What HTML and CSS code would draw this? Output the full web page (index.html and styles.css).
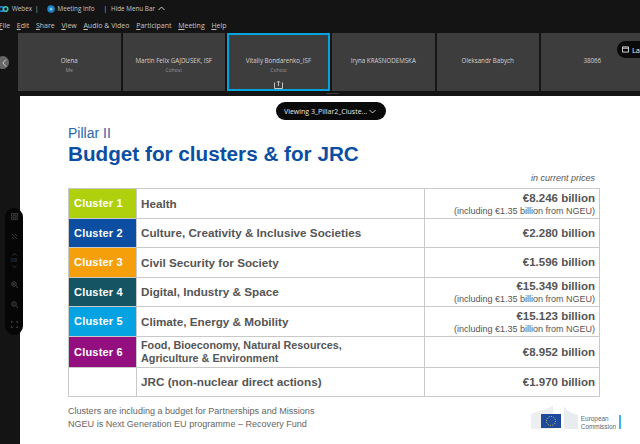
FILE: index.html
```html
<!DOCTYPE html>
<html lang="en">
<head>
<meta charset="utf-8">
<title>Webex</title>
<link rel="stylesheet" href="styles.css">
</head>
<body>
<div class="app">
  <div class="titlebar">
    <svg class="logo" width="10" height="8" viewBox="0 0 10 8"><circle cx="2.500" cy="4" r="2.300" fill="none" stroke="#2f7fe0" stroke-width="1.600"/><circle cx="6.500" cy="4" r="2.300" fill="none" stroke="#35c6a8" stroke-width="1.600"/></svg>
    <span class="t-webex">Webex</span><span class="sep">|</span>
    <svg class="info" width="8" height="8" viewBox="0 0 8 8"><circle cx="4" cy="4" r="3.800" fill="#1f7fc4"/><circle cx="4" cy="4" r="1.600" fill="#7cc6ee"/></svg>
    <span class="t-info">Meeting Info</span><span class="sep sep2">|</span>
    <span>Hide Menu Bar</span>
    <svg class="caret" width="7" height="5" viewBox="0 0 7 5"><path d="M.5 4 3.500 1l3 3" fill="none" stroke="#c8c8c8"/></svg>
  </div>
  <nav class="menubar">
    <span><u>F</u>ile</span><span><u>E</u>dit</span><span><u>S</u>hare</span><span><u>V</u>iew</span><span><u>A</u>udio &amp; Video</span><span><u>P</u>articipant</span><span><u>M</u>eeting</span><span><u>H</u>elp</span>
  </nav>
  <div class="tiles">
    <div class="tile"><b>Olena</b><i>Me</i></div>
    <div class="tile"><b>Martin Felix GAJDUSEK, ISF</b><i>Cohost</i></div>
    <div class="tile active"><b>Vitaliy Bondarenko_ISF</b><i>Cohost</i>
      <svg class="share" width="9" height="9" viewBox="0 0 9 9"><path d="M.5 2.500v6h8v-6M4.500 6V1M3 2.500 4.500 1 6 2.500" fill="none" stroke="#c4c4c4"/></svg>
    </div>
    <div class="tile"><b>Iryna KRASNODEMSKA</b></div>
    <div class="tile"><b>Oleksandr Babych</b></div>
    <div class="tile"><b>38066</b></div>
  </div>
  <main class="slide">
    <p class="pillar">Pillar II</p>
    <h1>Budget for clusters &amp; for JRC</h1>
    <p class="prices">in current prices</p>
    <div class="budget">
      <div class="row r1"><div class="tag c1">Cluster 1</div><div class="name">Health</div><div class="amt"><strong>€8.246 billion</strong><small>(including €1.35 billion from NGEU)</small></div></div>
      <div class="row r2"><div class="tag c2">Cluster 2</div><div class="name">Culture, Creativity &amp; Inclusive Societies</div><div class="amt"><strong>€2.280 billion</strong></div></div>
      <div class="row r3"><div class="tag c3">Cluster 3</div><div class="name">Civil Security for Society</div><div class="amt"><strong>€1.596 billion</strong></div></div>
      <div class="row r4"><div class="tag c4">Cluster 4</div><div class="name">Digital, Industry &amp; Space</div><div class="amt"><strong>€15.349 billion</strong><small>(including €1.35 billion from NGEU)</small></div></div>
      <div class="row r5"><div class="tag c5">Cluster 5</div><div class="name">Climate, Energy &amp; Mobility</div><div class="amt"><strong>€15.123 billion</strong><small>(including €1.35 billion from NGEU)</small></div></div>
      <div class="row r6"><div class="tag c6">Cluster 6</div><div class="name tight">Food, Bioeconomy, Natural Resources,<br>Agriculture &amp; Environment</div><div class="amt"><strong>€8.952 billion</strong></div></div>
      <div class="row r7"><div class="tag"></div><div class="name">JRC (non-nuclear direct actions)</div><div class="amt"><strong>€1.970 billion</strong></div></div>
    </div>
    <div class="foot">
      <p>Clusters are including a budget for Partnerships and Missions<br>NGEU is Next Generation EU programme – Recovery Fund</p>
      <div class="ec">
        <svg width="47" height="24" viewBox="0 0 47 24"><path d="M0 9 20 2 22 0v24H0z" fill="#eceef0"/><path d="M33 0c1 5 6 8 14 10v14H33z" fill="#e8ecef"/><rect x="10" y="9" width="20" height="14" fill="#1f4a9c"/><circle cx="20" cy="16" r="4.500" fill="none" stroke="#e8d44a" stroke-dasharray="1 1.300"/></svg>
        <span>European<br>Commission</span><em></em>
      </div>
    </div>
  </main>
</div>
<div class="scrollthumb"></div>
<button class="prev" aria-label="Previous"><svg width="5" height="8" viewBox="0 0 5 8"><path d="M4 .5.800 4 4 7.500" fill="none" stroke="#d0d0d0"/></svg></button>
<div class="layout"><svg width="8" height="7" viewBox="0 0 8 7"><path d="M.5.500h7v6h-7zM.5 2h7" fill="none" stroke="#eee"/></svg><span>La</span></div>
<div class="viewing"><span>Viewing 3_Pillar2_Cluste...</span><svg width="7" height="5" viewBox="0 0 7 5"><path d="M.5 1 3.500 4l3-3" fill="none" stroke="#ccc"/></svg></div>
<div class="tools">
  <svg width="7" height="7" viewBox="0 0 7 7"><path d="M.5.500H3V3H.5zM4 .5h2.500V3H4zM.5 4H3v2.500H.5zM4 4h2.500v2.500H4z" fill="none" stroke="#3a3a3a"/></svg>
  <svg width="7" height="7" viewBox="0 0 7 7"><path d="M1 1l5 5M1 4l2 2M4 1l2 2" fill="none" stroke="#3a3a3a"/></svg>
  <div class="stepper">
    <svg width="5" height="3" viewBox="0 0 5 3"><path d="M.5 2.500 2.500.5l2 2" fill="none" stroke="#333"/></svg>
    <span class="zoomval">08</span>
    <svg width="5" height="3" viewBox="0 0 5 3"><path d="M.5.500l2 2 2-2" fill="none" stroke="#333"/></svg>
  </div>
  <svg width="7" height="7" viewBox="0 0 7 7"><circle cx="3" cy="3" r="2.300" fill="none" stroke="#444"/><path d="M5 5l2 2M2 3h2M3 2v2" stroke="#444"/></svg>
  <svg width="7" height="7" viewBox="0 0 7 7"><circle cx="3" cy="3" r="2.300" fill="none" stroke="#444"/><path d="M5 5l2 2M2 3h2" stroke="#444"/></svg>
  <svg width="7" height="7" viewBox="0 0 7 7"><path d="M.5 2V.5H2M5 .5h1.500V2M6.500 5v1.500H5M2 6.500H.5V5" fill="none" stroke="#3a3a3a"/></svg>
</div>
</body>
</html>
```
FILE: styles.css
```css
* { box-sizing: border-box; }
html, body { margin: 0; padding: 0; }
body {
  width: 640px;
  height: 444px;
  overflow: hidden;
  position: relative;
  background: #141414;
  font-family: "Liberation Sans", Arial, sans-serif;
}
.app { display: flex; flex-direction: column; height: 444px; }

.titlebar {
  height: 17px;
  display: flex;
  align-items: center;
  font-family: "Open Sans", sans-serif;
  font-size: 6.300px;
  color: #c4c4c4;
  white-space: nowrap;
}
.logo { margin-left: -1px; }
.t-webex { margin-left: 3px; }
.sep { margin: 0 8px 0 3px; }
.sep2 { margin: 0 4px 0 9px; }
.t-info { margin-left: 3px; }
.caret { margin-left: 3px; }

.menubar {
  height: 16px;
  display: flex;
  align-items: center;
  gap: 6.700px;
  margin-left: -1px;
  font-family: "Open Sans", sans-serif;
  font-size: 7px;
  color: #c4c4c4;
}
.menubar u { text-decoration-thickness: 1px; }

.tiles {
  margin-left: 18px;
  height: 58px;
  display: flex;
  gap: 2px;
  overflow: hidden;
}
.tile {
  position: relative;
  flex: 0 0 102.500px;
  background: #3d3d3d;
  display: flex;
  flex-direction: column;
  align-items: center;
  gap: 2px;
  padding-top: 24px;
  font-family: "Open Sans", sans-serif;
  color: #d2d2d2;
}
.tile b { font-weight: 400; font-size: 6.200px; line-height: 8px; white-space: nowrap; }
.tile i { font-style: normal; font-size: 5px; line-height: 6px; color: #969696; }
.tile.active { border: 2px solid #00a5e0; flex-basis: 103px; padding-top: 22px; }
.share { position: absolute; left: 45px; bottom: 0; }

.slide {
  margin: 5px 0 0 20px;
  flex: 1;
  background: #fff;
  padding: 29px 40px 0 48px;
  min-height: 0;
}
.pillar { margin: 0; font-size: 14px; line-height: 16px; color: #2d66a8; }
h1 { margin: 0; font-size: 20.700px; line-height: 26px; font-weight: 700; color: #0b4ea2; white-space: nowrap; }
.prices { margin: 5.500px 0 0; padding-right: 5px; text-align: right; font-size: 9px; line-height: 11px; font-style: italic; color: #555; }

.budget { margin-top: 4.500px; border: 1px solid #c9c9c9; border-width: 1px 1px 0 1px; }
.row { display: grid; grid-template-columns: 68px 288px 1fr; border-bottom: 1px solid #c9c9c9; }
.r1, .r2, .r3, .r4, .r5 { height: 29.500px; }
.r6 { height: 31px; }
.r7 { height: 29.500px; }
.tag {
  display: flex;
  align-items: center;
  padding-left: 5px;
  font-size: 11px;
  font-weight: 700;
  letter-spacing: .2px;
  color: #fff;
  border-right: 1px solid #c9c9c9;
}
.c1 { background: #afd00c; }
.c2 { background: #0b4ea2; }
.c3 { background: #f59f0b; }
.c4 { background: #155563; }
.c5 { background: #06a3e2; }
.c6 { background: #930f80; }
.name {
  display: flex;
  align-items: center;
  padding-left: 4px;
  font-size: 11.700px;
  font-weight: 700;
  color: #555;
  border-right: 1px solid #c9c9c9;
}
.name.tight { display: block; padding-top: 2px; line-height: 13px; font-size: 10.800px; }
.amt {
  display: flex;
  flex-direction: column;
  justify-content: center;
  align-items: flex-end;
  gap: 1px;
  padding: 1px 4px 0 0;
  color: #555;
}
.amt strong { font-size: 11.500px; line-height: 13px; }
.amt small { font-size: 9px; line-height: 10px; white-space: nowrap; }

.foot {
  display: flex;
  justify-content: space-between;
  margin-top: 8px;
}
.foot p { margin: 0; font-size: 9.050px; line-height: 12.500px; color: #666; white-space: nowrap; }
.ec { display: flex; align-items: flex-start; gap: 3px; margin-right: -21px; }
.ec span { font-size: 6.400px; line-height: 8px; margin-top: 10px; color: #666; }
.ec em { width: 2px; height: 14px; margin-top: 10px; background: #3bb5e6; }

.scrollthumb {
  position: absolute;
  left: 326px;
  top: 93px;
  width: 13px;
  height: 1px;
  background: #3a3a3a;
}
.prev {
  position: absolute;
  left: -3px;
  top: 56px;
  width: 12px;
  height: 13px;
  padding: 0 0 0 3px;
  border: 0;
  border-radius: 50%;
  background: #666;
  display: flex;
  align-items: center;
  justify-content: center;
}
.layout {
  position: absolute;
  left: 617px;
  top: 41px;
  width: 23px;
  height: 17px;
  border-radius: 9px 0 0 9px;
  background: #0a0a0a;
  display: flex;
  align-items: center;
  gap: 3px;
  padding-left: 5px;
  font-family: "Open Sans", sans-serif;
  font-size: 7.500px;
  color: #eee;
}
.viewing {
  position: absolute;
  left: 276px;
  top: 102px;
  width: 110px;
  height: 18px;
  border-radius: 9px;
  background: #0a0a0a;
  display: flex;
  align-items: center;
  justify-content: space-between;
  padding: 0 10px 0 8px;
  font-family: "Open Sans", sans-serif;
  font-size: 7px;
  color: #e6e6e6;
  white-space: nowrap;
}
.tools {
  position: absolute;
  left: 5px;
  top: 208px;
  width: 18px;
  height: 127px;
  border-radius: 9px;
  background: #060606;
  display: flex;
  flex-direction: column;
  align-items: center;
  justify-content: space-between;
  padding: 5px 0 7px;
}
.stepper { display: flex; flex-direction: column; align-items: center; gap: 1px; }
.stepper svg { display: block; }
.zoomval { font-size: 6px; line-height: 7px; color: #444; font-family: "Open Sans", sans-serif; }
```
